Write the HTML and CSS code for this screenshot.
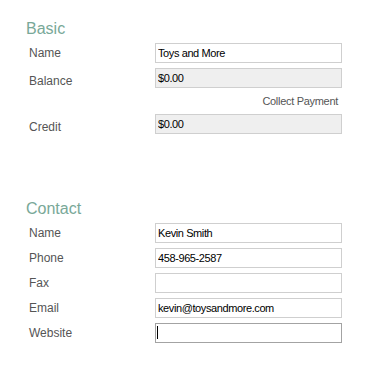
FILE: index.html
```html
<!DOCTYPE html>
<html>
<head>
    <title>Customer</title>
    <link rel="stylesheet" href="styles.css">
</head>
<body>
    <div class="container">
        <h2 class="section-title">Basic</h2>
        <div class="row">
            <span class="field-label">Name</span>
            <input type="text" class="field" value="Toys and More">
        </div>
        <div class="row">
            <span class="field-label low">Balance</span>
            <input type="text" class="field readonly" value="$0.00" readonly>
        </div>
        <div class="link-row">
            <span class="collect">Collect Payment</span>
        </div>
        <div class="row">
            <span class="field-label low">Credit</span>
            <input type="text" class="field readonly" value="$0.00" readonly>
        </div>

        <h2 class="section-title contact">Contact</h2>
        <div class="row">
            <span class="field-label">Name</span>
            <input type="text" class="field" value="Kevin Smith">
        </div>
        <div class="row">
            <span class="field-label">Phone</span>
            <input type="text" class="field" value="458-965-2587">
        </div>
        <div class="row">
            <span class="field-label">Fax</span>
            <input type="text" class="field" value="">
        </div>
        <div class="row">
            <span class="field-label">Email</span>
            <input type="text" class="field" value="kevin@toysandmore.com">
        </div>
        <div class="row last">
            <span class="field-label">Website</span>
            <div class="caret-wrap">
                <input type="text" class="field focused" value="">
            </div>
        </div>
    </div>
</body>
</html>
```
FILE: styles.css
```css
body {
    margin: 0;
    background-color: #ffffff;
    font-family: "Liberation Sans", Arial, sans-serif;
}

.container {
    padding: 21px 0 0 26px;
}

.section-title {
    margin: 0 0 6px 0;
    font-size: 16px;
    line-height: 16px;
    font-weight: normal;
    color: #79a898;
}

.section-title.contact {
    margin-top: 67px;
}

.row {
    display: grid;
    grid-template-columns: 129px 187px;
    align-items: center;
    height: 20px;
    margin-bottom: 5px;
}

.row.last {
    margin-top: 1px;
}

.field-label {
    padding-left: 3px;
    font-size: 12px;
    color: #555555;
}

.field-label.low {
    margin-top: 5px;
}

.field {
    box-sizing: border-box;
    width: 187px;
    height: 20px;
    margin: 0;
    padding: 0 2px;
    border: 1px solid #cfcfcf;
    font-family: "Liberation Sans", Arial, sans-serif;
    font-size: 11px;
    letter-spacing: -0.4px;
    color: #000000;
    background-color: #ffffff;
    outline: none;
}

.field.readonly {
    background-color: #efefef;
}

.field.focused {
    border-color: #a3a3a3;
}

.caret-wrap {
    position: relative;
    height: 20px;
}

.caret-wrap::after {
    content: "";
    position: absolute;
    left: 2px;
    top: 3px;
    width: 1px;
    height: 13px;
    background-color: #000000;
}

.link-row {
    display: flex;
    justify-content: flex-end;
    width: 312px;
    height: 16px;
    margin-bottom: 5px;
    line-height: 16px;
}

.collect {
    font-size: 11px;
    letter-spacing: -0.3px;
    color: #555555;
}
```
